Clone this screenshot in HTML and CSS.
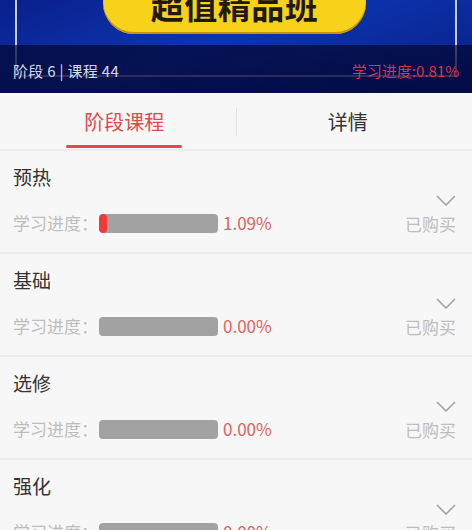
FILE: index.html
```html
<!DOCTYPE html>
<html lang="zh">
<head>
<meta charset="utf-8">
<link rel="stylesheet" href="styles.css">
</head>
<body>
<div class="banner">
  <div class="frame"></div>
  <div class="pill"><span class="pill-text">超值精品班</span></div>
  <div class="band">
    <span class="meta">阶段 6 | 课程 44</span>
    <span class="meta-progress">学习进度:0.81%</span>
  </div>
</div>
<div class="tabs">
  <div class="tab active"><span class="tab-label">阶段课程</span></div>
  <div class="tab-divider"></div>
  <div class="tab"><span class="tab-label">详情</span></div>
</div>
<div class="list">
  <div class="row">
    <div class="left">
      <div class="title">预热</div>
      <div class="progress">
        <span class="plabel">学习进度：</span>
        <span class="bar"><span class="fill" style="width:8px"></span></span>
        <span class="pct">1.09%</span>
      </div>
    </div>
    <div class="right">
      <svg class="chev" width="20" height="11" viewBox="0 0 20 11"><path d="M1 1 L10 10 L19 1" fill="none" stroke="#a3a3a3" stroke-width="1.6"/></svg>
      <span class="bought">已购买</span>
    </div>
  </div>
  <div class="row">
    <div class="left">
      <div class="title">基础</div>
      <div class="progress">
        <span class="plabel">学习进度：</span>
        <span class="bar"></span>
        <span class="pct">0.00%</span>
      </div>
    </div>
    <div class="right">
      <svg class="chev" width="20" height="11" viewBox="0 0 20 11"><path d="M1 1 L10 10 L19 1" fill="none" stroke="#a3a3a3" stroke-width="1.6"/></svg>
      <span class="bought">已购买</span>
    </div>
  </div>
  <div class="row">
    <div class="left">
      <div class="title">选修</div>
      <div class="progress">
        <span class="plabel">学习进度：</span>
        <span class="bar"></span>
        <span class="pct">0.00%</span>
      </div>
    </div>
    <div class="right">
      <svg class="chev" width="20" height="11" viewBox="0 0 20 11"><path d="M1 1 L10 10 L19 1" fill="none" stroke="#a3a3a3" stroke-width="1.6"/></svg>
      <span class="bought">已购买</span>
    </div>
  </div>
  <div class="row">
    <div class="left">
      <div class="title">强化</div>
      <div class="progress">
        <span class="plabel">学习进度：</span>
        <span class="bar"></span>
        <span class="pct">0.00%</span>
      </div>
    </div>
    <div class="right">
      <svg class="chev" width="20" height="11" viewBox="0 0 20 11"><path d="M1 1 L10 10 L19 1" fill="none" stroke="#a3a3a3" stroke-width="1.6"/></svg>
      <span class="bought">已购买</span>
    </div>
  </div>
</div>
</body>
</html>
```
FILE: styles.css
```css
html, body {
  margin: 0;
  padding: 0;
  background: #f7f7f7;
  font-family: "Noto Sans CJK SC", "Noto Sans", sans-serif;
  overflow: hidden;
}

.banner {
  position: relative;
  height: 93px;
  background:
    linear-gradient(160deg, #0a1f8a 0%, #0c35b0 45%, #0a2a9c 70%, #0a1e80 100%);
  display: flex;
  flex-direction: column;
  justify-content: flex-end;
  overflow: hidden;
}

.frame {
  position: absolute;
  left: 15px;
  right: 15px;
  top: -4px;
  height: 81px;
  border: 2px solid #c9cde0;
  border-top: none;
  box-sizing: border-box;
  z-index: 1;
}

.pill {
  position: absolute;
  left: 103px;
  width: 263px;
  top: -28px;
  height: 62px;
  border-radius: 31px;
  background: #f8d21a;
  box-shadow: inset 0 -2px 0 #c79400;
  display: flex;
  align-items: center;
  justify-content: center;
}

.pill-text {
  font-size: 33px;
  font-weight: 700;
  color: #1e1a10;
  line-height: 1;
  margin-top: 4px;
  letter-spacing: 0.5px;
}

.band {
  height: 48px;
  box-sizing: border-box;
  background: linear-gradient(180deg, rgba(2, 6, 50, 0.7), rgba(3, 8, 60, 0.85));
  display: flex;
  justify-content: space-between;
  align-items: flex-end;
  padding: 0 13px 13px 13px;
  position: relative;
  z-index: 2;
}

.meta {
  font-size: 15px;
  line-height: 18px;
  color: #d6d9e6;
  letter-spacing: 0.3px;
}

.meta-progress {
  font-size: 15px;
  line-height: 18px;
  color: #d8344a;
}

.tabs {
  height: 58px;
  box-sizing: border-box;
  display: flex;
  align-items: center;
  padding: 0 13px;
  border-bottom: 2px solid #ececec;
  background: #f7f7f7;
}

.tab {
  flex: 1;
  height: 100%;
  display: flex;
  align-items: center;
  justify-content: center;
  position: relative;
}

.tab-label {
  font-size: 20px;
  color: #333;
  line-height: 26px;
  margin-top: 2px;
}

.tab.active .tab-label {
  color: #e04a4f;
}

.tab.active::after {
  content: "";
  position: absolute;
  bottom: 1px;
  left: 53px;
  width: 116px;
  height: 3px;
  border-radius: 2px;
  background: #e04a4f;
}

.tab-divider {
  width: 1px;
  height: 28px;
  background: #e2e2e2;
  margin-top: 2px;
}

.row {
  height: 103px;
  box-sizing: border-box;
  border-bottom: 2px solid #ededed;
  display: flex;
  justify-content: space-between;
  padding: 13px 16px 0 13px;
}

.left {
  display: flex;
  flex-direction: column;
}

.title {
  font-size: 19px;
  line-height: 26px;
  color: #333;
}

.progress {
  margin-top: 22px;
  height: 22px;
  display: flex;
  align-items: center;
}

.plabel {
  font-size: 17px;
  color: #bdbdbd;
  line-height: 22px;
  width: 86px;
}

.bar {
  width: 119px;
  height: 19px;
  border-radius: 4px;
  background: #a2a2a2;
  display: flex;
  overflow: hidden;
}

.fill {
  height: 100%;
  background: #f03a3a;
  border-radius: 4px;
}

.pct {
  margin-left: 5px;
  font-size: 17px;
  color: #e06060;
  line-height: 22px;
}

.right {
  display: flex;
  flex-direction: column;
  align-items: flex-end;
}

.chev {
  margin-top: 31px;
  display: block;
}

.bought {
  margin-top: 7px;
  font-size: 17px;
  line-height: 22px;
  color: #bdbdbd;
}
```
